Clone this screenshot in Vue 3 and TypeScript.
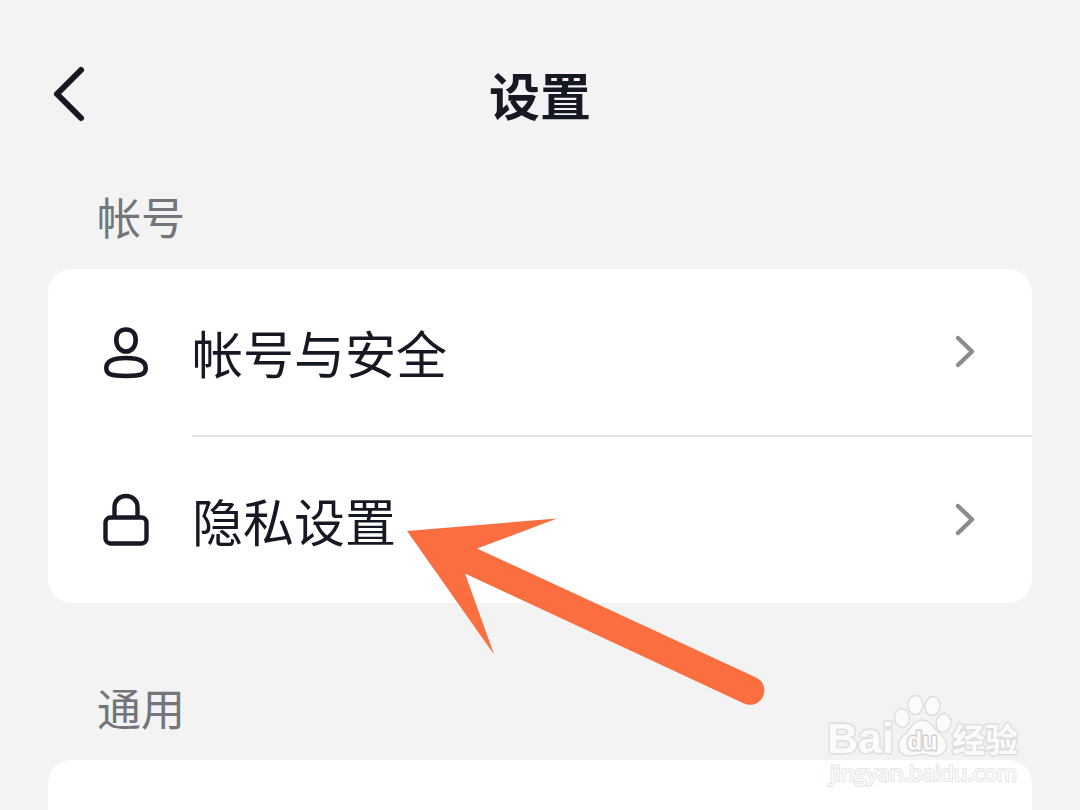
<script setup lang="ts">
interface SettingItem {
  id: string
  label: string
  icon: 'person' | 'lock'
}

const accountItems: SettingItem[] = [
  { id: 'security', label: '帐号与安全', icon: 'person' },
  { id: 'privacy', label: '隐私设置', icon: 'lock' },
]
</script>

<template>
  <div class="page">
    <header class="bar">
      <button class="back" type="button" aria-label="返回">
        <svg width="40" height="60" viewBox="0 0 40 60" fill="none" aria-hidden="true">
          <path d="M33 6 9 30 33 54" stroke="#161823" stroke-width="6" stroke-linecap="round" stroke-linejoin="round" />
        </svg>
      </button>
      <h1>设置</h1>
    </header>

    <main>
      <h2>帐号</h2>
      <ul class="card">
        <li v-for="item in accountItems" :key="item.id">
          <a class="row" href="#">
            <svg v-if="item.icon === 'person'" class="icon" viewBox="0 0 48 56" fill="none" stroke="#161823" stroke-width="4.6" aria-hidden="true">
              <path d="M24 5.5C30.5 5.5 33.7 10 33.7 16C33.7 22.5 29.7 27.5 24 27.5S14.3 22.500 14.300 16C14.300 10 17.500 5.500 24 5.500Z" />
              <path d="M24 34C34 34 43.700 36 43.700 44C43.700 50.500 39 52 24 52S4.300 50.500 4.300 44C4.300 36 14 34 24 34Z" />
            </svg>
            <svg v-else class="icon" viewBox="0 0 48 56" fill="none" stroke="#161823" stroke-width="4.4" aria-hidden="true">
              <path d="M12.500 25V15C12.500 8.500 17.500 4 24 4S35.500 8.500 35.500 15V25" />
              <rect x="3.500" y="25.500" width="41" height="26" rx="5" />
            </svg>
            <span class="label">{{ item.label }}</span>
            <svg class="chevron" width="24" height="36" viewBox="0 0 24 36" fill="none" aria-hidden="true">
              <path d="M5 4 19 17.500 5 31" stroke="#8b8b91" stroke-width="4.4" stroke-linecap="round" stroke-linejoin="round" />
            </svg>
          </a>
        </li>
      </ul>

      <h2>通用</h2>
      <section class="card next" aria-label="通用"></section>
    </main>

    <svg class="arrow" width="360" height="190" viewBox="0 0 360 190" aria-hidden="true">
      <path d="M1 15 151 2.500 71 32.500 350 161.500A14 14 0 0 1 338 187.500L59 57.500 88 138.500Z" fill="#fa6e40" />
    </svg>

    <svg class="watermark" width="212" height="100" viewBox="0 0 212 100" role="img" aria-label="Baidu 经验 jingyan.baidu.com">
      <g fill="#fbfbfb" stroke="#dedede" stroke-width="1.5">
        <ellipse cx="82" cy="28" rx="7.5" ry="9.5" transform="rotate(-8 82 28)" />
        <ellipse cx="95.5" cy="15" rx="7.5" ry="9.5" />
        <ellipse cx="112.5" cy="16" rx="7.5" ry="9.5" transform="rotate(8 112.5 16)" />
        <ellipse cx="123.5" cy="33" rx="7.5" ry="9.5" transform="rotate(8 123.5 33)" />
        <path d="M102 30C93 30 91 39 84 45C75 52 77 66 90 66C97 66 99 64 103 64S112 67 117 66C129 64 129 52 121 45C114 39 111 30 102 30Z" />
        <text class="brand" x="7" y="63">Bai</text>
        <text class="cn" x="132" y="62">经验</text>
        <text class="url" x="10" y="91">jingyan.baidu.com</text>
      </g>
      <text class="du" x="87" y="60">du</text>
    </svg>
  </div>
</template>

<style>
body {
  margin: 0;
  background: #f3f3f3;
}
</style>

<style scoped>
.page {
  position: relative;
  display: flex;
  flex-direction: column;
  box-sizing: border-box;
  min-height: 100vh;
  padding: 0 48px;
  overflow: hidden;
  background: #f3f3f3;
  color: #161823;
  font-family: "Noto Sans CJK SC", sans-serif;
}

.bar {
  display: grid;
  grid-template-columns: 48px 1fr 48px;
  align-items: center;
  height: 187px;
  padding-bottom: 2px;
}

.back {
  display: flex;
  padding: 0;
  border: 0;
  background: none;
  cursor: pointer;
}

h1 {
  margin: 0;
  font-size: 51px;
  line-height: 64px;
  font-weight: 700;
  text-align: center;
}

main {
  display: flex;
  flex: 1;
  flex-direction: column;
}

h2 {
  margin: 0;
  padding: 0 49px 26px;
  color: #74747b;
  font-size: 44px;
  line-height: 54px;
  font-weight: 400;
}

.card {
  margin: 0;
  padding: 0;
  border-radius: 24px;
  background: #fff;
  list-style: none;
}

.card + h2 {
  padding-top: 77px;
}

.row {
  display: flex;
  align-items: center;
  height: 166px;
  padding: 0 55px 0 54px;
  color: inherit;
  text-decoration: none;
}

li + li::before {
  display: block;
  height: 2px;
  margin-left: 144px;
  background: #e4e4e5;
  content: "";
}

.icon {
  width: 48px;
  height: 56px;
}

.label {
  flex: 1;
  margin-left: 42px;
  font-size: 51px;
  line-height: 72px;
}

.next {
  flex: 1;
  border-radius: 24px 24px 0 0;
}

.arrow {
  position: absolute;
  top: 516px;
  left: 406px;
  pointer-events: none;
}

.watermark {
  position: absolute;
  right: 48px;
  bottom: 20px;
  pointer-events: none;
}

.watermark text {
  paint-order: stroke;
  stroke-width: 3px;
  stroke-linejoin: round;
}

.brand {
  font: 700 43px "Liberation Sans", sans-serif;
}

.cn {
  font: 700 33px "Noto Sans CJK SC", sans-serif;
}

.watermark .url {
  font: 400 22px "Open Sans", sans-serif;
  stroke: #e4e4e4;
  stroke-width: 2px;
}

.du {
  fill: #fbfbfb;
  stroke: #d0d0d0;
  font: 700 25px "Liberation Sans", sans-serif;
}
</style>
